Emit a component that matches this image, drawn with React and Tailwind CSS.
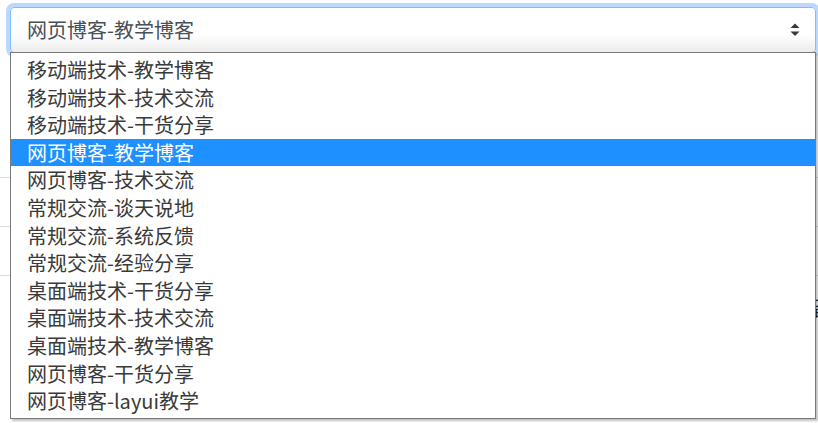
import React from 'react';

const options = [
  '移动端技术-教学博客',
  '移动端技术-技术交流',
  '移动端技术-干货分享',
  '网页博客-教学博客',
  '网页博客-技术交流',
  '常规交流-谈天说地',
  '常规交流-系统反馈',
  '常规交流-经验分享',
  '桌面端技术-干货分享',
  '桌面端技术-技术交流',
  '桌面端技术-教学博客',
  '网页博客-干货分享',
  '网页博客-layui教学',
];

const selected = '网页博客-教学博客';

export default function App() {
  return (
    <div
      className="w-[818px] h-[423px] overflow-hidden bg-white pt-[7px]"
      style={{ fontFamily: '"Microsoft YaHei", "Noto Sans CJK SC", "Noto Sans", sans-serif' }}
    >
      {/* 选择框 + 展开的下拉列表 */}
      <div className="relative z-10 ml-[10px] w-[806px]">
        <div className="h-[46px] rounded-[4px] border border-[#80bdff] shadow-[0_0_0_4px_#bcd9fb] bg-gradient-to-b from-white from-60% to-[#ececec] flex items-center justify-between pl-[16px] pr-[15px]">
          <span className="text-[20px] leading-[24px] text-[#495057]">{selected}</span>
          <svg width="10" height="14" viewBox="0 0 10 14" className="text-[#343a40]">
            <path d="M0.5 5 L5 0.5 L9.5 5 Z" fill="currentColor" />
            <path d="M0.5 8.5 L5 13 L9.5 8.5 Z" fill="currentColor" />
          </svg>
        </div>

        <div className="absolute left-0 top-[45px] w-[806px] h-[367px] border border-[#7a7a7a] bg-white pt-[3px] shadow-[2px_2px_2px_rgba(0,0,0,0.25)]">
          {options.map(item => (
            <div
              key={item}
              className={`h-[27.6px] pl-[16px] text-[20px] leading-[27.6px] whitespace-nowrap ${item === selected ? 'bg-[#1e90ff] text-white' : 'text-[#3a3a3a]'}`}
            >
              {item}
            </div>
          ))}
        </div>
      </div>

      {/* 被遮住的页面内容 */}
      <div className="flex flex-col">
        <div className="h-[125px] border-b border-[#dcdcdc]" />
        <div className="h-[49px] border-b border-[#dcdcdc]" />
        <div className="h-[49px] border-b border-[#dcdcdc]" />
        <div className="h-[50px] flex justify-end text-[20px] leading-[20px] text-[#222]">
          <span className="pt-[22px] -mr-[14px]">留</span>
        </div>
      </div>
    </div>
  );
}
